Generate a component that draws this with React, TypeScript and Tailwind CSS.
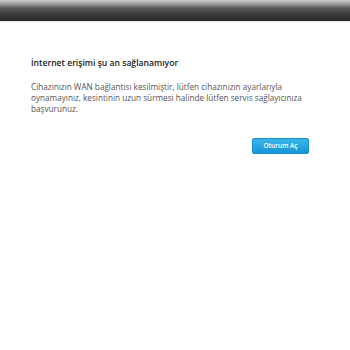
export default function App() {
  return (
    <div className="w-[350px] h-[350px] bg-white font-['Open_Sans',sans-serif] overflow-hidden">
      <div className="h-[22px] bg-[linear-gradient(to_bottom,#cfcfcf_0px,#9a9a9a_4px,#5a5a5a_8px,#3c3c3c_14px,#2c2c2c_20px,#262626_21px)] border-b border-[#e6e6e6]" />
      <div className="pl-[31px] pr-[30px] pt-[35px]">
        <h1 className="text-[8.6px] font-semibold text-[#222] leading-[12px]">İnternet erişimi şu an sağlanamıyor</h1>
        <p className="mt-[12px] text-[8.2px] text-[#555] leading-[11px]">
          Cihazınızın WAN bağlantısı kesilmiştir, lütfen cihazınızın ayarlarıyla oynamayınız, kesintinin uzun sürmesi halinde lütfen servis sağlayıcınıza başvurunuz.
        </p>
        <div className="flex justify-end mt-[24px] pr-[11px]">
          <button className="w-[57px] h-[16px] rounded-[2px] bg-[linear-gradient(to_bottom,#3ab6ec,#1596d6)] border border-[#1a8fca] text-white text-[6.5px] font-semibold leading-none">
            Oturum Aç
          </button>
        </div>
      </div>
    </div>
  );
}
